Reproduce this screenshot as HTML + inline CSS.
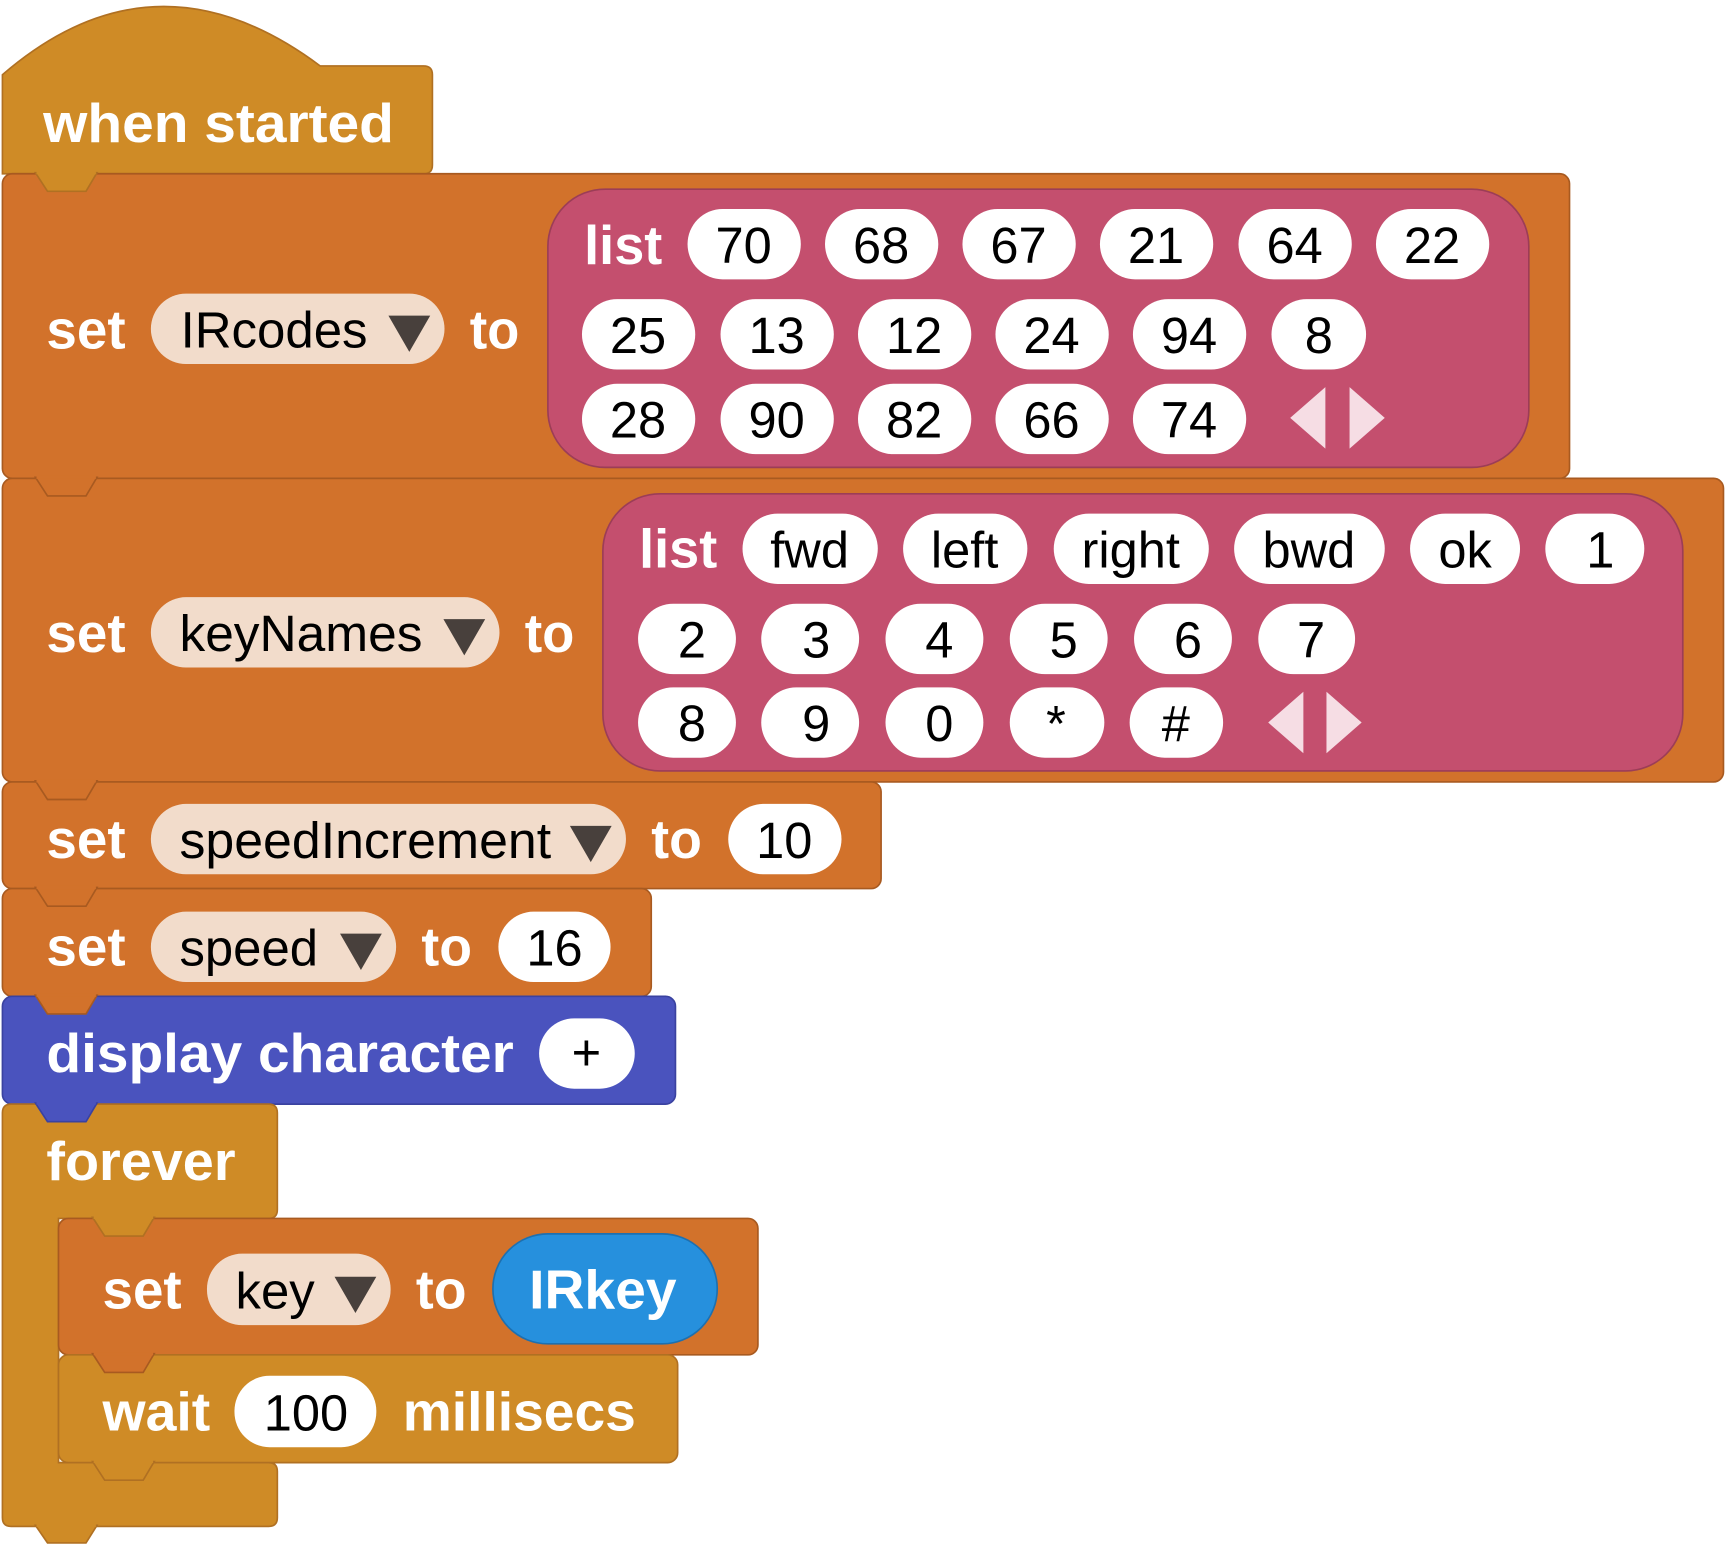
<!DOCTYPE html>
<html><head><meta charset="utf-8"><style>
html,body{margin:0;padding:0;background:#fff;}
svg{display:block;}
.b{font-family:"Liberation Sans",sans-serif;font-weight:bold;fill:#fff;font-size:50px;}
.r{font-family:"Liberation Sans",sans-serif;fill:#000;font-size:46px;}
</style></head><body>
<svg width="1727" height="1544" viewBox="0 0 1568 1404" xmlns="http://www.w3.org/2000/svg">
<!-- hat -->
<path d="M1,158 V68 Q140,-52 290,60 H384 Q392,60 392,68 V150 Q392,158 384,158 Z" fill="#CF8B26" stroke="#B07022" stroke-width="1.5"/>
<!-- set IRcodes -->
<rect x="1" y="158" width="1425" height="277" rx="9" fill="#D2722B" stroke="#A85A20" stroke-width="1.5"/>
<!-- set keyNames -->
<rect x="1" y="435" width="1565" height="276" rx="9" fill="#D2722B" stroke="#A85A20" stroke-width="1.5"/>
<!-- speedIncrement -->
<rect x="1" y="711" width="799" height="97" rx="9" fill="#D2722B" stroke="#A85A20" stroke-width="1.5"/>
<!-- speed -->
<rect x="1" y="808" width="590" height="98" rx="9" fill="#D2722B" stroke="#A85A20" stroke-width="1.5"/>
<!-- display -->
<rect x="1" y="906" width="612" height="98" rx="9" fill="#4A53BE" stroke="#3A42A0" stroke-width="1.5"/>
<!-- forever -->
<path d="M1,1012 Q1,1004 9,1004 H243 Q251,1004 251,1012 V1100 Q251,1108 243,1108 H52 V1330 H243 Q251,1330 251,1338 V1380 Q251,1388 243,1388 H9 Q1,1388 1,1380 Z" fill="#CF8B26" stroke="#B07022" stroke-width="1.5"/>
<!-- set key -->
<rect x="52" y="1108" width="636" height="124" rx="9" fill="#D2722B" stroke="#A85A20" stroke-width="1.5"/>
<!-- wait -->
<rect x="52" y="1232" width="563" height="98" rx="9" fill="#CF8B26" stroke="#B07022" stroke-width="1.5"/>

<!-- tabs -->
<g stroke-width="1.5">
<polygon points="31,157 42,174 77,174 87,157" fill="#CF8B26" stroke="#B07022"/>
<polygon points="31,434 42,451 77,451 87,434" fill="#D2722B" stroke="#A85A20"/>
<polygon points="31,710 42,727 77,727 87,710" fill="#D2722B" stroke="#A85A20"/>
<polygon points="31,807 42,824 77,824 87,807" fill="#D2722B" stroke="#A85A20"/>
<polygon points="31,905 42,922 77,922 87,905" fill="#D2722B" stroke="#A85A20"/>
<polygon points="31,1003 42,1020 77,1020 87,1003" fill="#4A53BE" stroke="#3A42A0"/>
<polygon points="83,1107 94,1124 129,1124 139,1107" fill="#CF8B26" stroke="#B07022"/>
<polygon points="83,1231 94,1248 129,1248 139,1231" fill="#D2722B" stroke="#A85A20"/>
<polygon points="83,1329 94,1346 129,1346 139,1329" fill="#CF8B26" stroke="#B07022"/>
<polygon points="31,1387 42,1403 77,1403 87,1387" fill="#CF8B26" stroke="#B07022"/>
</g>
<!-- cover tab top lines -->
<g stroke-width="3">
<line x1="32" y1="157" x2="86" y2="157" stroke="#CF8B26"/>
<line x1="32" y1="434" x2="86" y2="434" stroke="#D2722B"/>
<line x1="32" y1="710" x2="86" y2="710" stroke="#D2722B"/>
<line x1="32" y1="807" x2="86" y2="807" stroke="#D2722B"/>
<line x1="32" y1="905" x2="86" y2="905" stroke="#D2722B"/>
<line x1="32" y1="1003" x2="86" y2="1003" stroke="#4A53BE"/>
<line x1="84" y1="1107" x2="138" y2="1107" stroke="#CF8B26"/>
<line x1="84" y1="1231" x2="138" y2="1231" stroke="#D2722B"/>
<line x1="84" y1="1329" x2="138" y2="1329" stroke="#CF8B26"/>
<line x1="32" y1="1387" x2="86" y2="1387" stroke="#CF8B26"/>
</g>

<!-- list blocks -->
<rect x="497" y="172" width="892" height="253" rx="52" fill="#C44F6E" stroke="#9C3D57" stroke-width="1.5"/>
<rect x="547" y="449" width="982" height="252" rx="52" fill="#C44F6E" stroke="#9C3D57" stroke-width="1.5"/>

<!-- IRkey -->
<rect x="447" y="1122" width="204" height="100" rx="50" fill="#2690DD" stroke="#1D70B0" stroke-width="1.5"/>

<!-- dropdowns -->
<g fill="#F2DCCB">
<rect x="136" y="267" width="267" height="64" rx="32"/>
<rect x="136" y="543" width="317" height="64" rx="32"/>
<rect x="136" y="731" width="432" height="64" rx="32"/>
<rect x="136" y="829" width="223" height="64" rx="32"/>
<rect x="187" y="1140" width="167" height="65" rx="32"/>
</g>
<g fill="#48403C">
<polygon points="352,287 390,287 371,320"/>
<polygon points="402,563 440,563 421,596"/>
<polygon points="517,751 555,751 536,784"/>
<polygon points="308,849 346,849 327,882"/>
<polygon points="303,1161 341,1161 322,1194"/>
</g>

<!-- white pills -->
<g fill="#fff">
<rect x="624" y="190" width="103" height="64" rx="32"/><rect x="749" y="190" width="103" height="64" rx="32"/><rect x="874" y="190" width="103" height="64" rx="32"/><rect x="999" y="190" width="103" height="64" rx="32"/><rect x="1125" y="190" width="103" height="64" rx="32"/><rect x="1250" y="190" width="103" height="64" rx="32"/>
<rect x="528" y="272" width="103" height="64" rx="32"/><rect x="654" y="272" width="103" height="64" rx="32"/><rect x="779" y="272" width="103" height="64" rx="32"/><rect x="904" y="272" width="103" height="64" rx="32"/><rect x="1029" y="272" width="103" height="64" rx="32"/><rect x="1155" y="272" width="86" height="64" rx="32"/>
<rect x="528" y="349" width="103" height="64" rx="32"/><rect x="654" y="349" width="103" height="64" rx="32"/><rect x="779" y="349" width="103" height="64" rx="32"/><rect x="904" y="349" width="103" height="64" rx="32"/><rect x="1029" y="349" width="103" height="64" rx="32"/>
<rect x="674" y="467" width="123" height="64" rx="32"/><rect x="820" y="467" width="113" height="64" rx="32"/><rect x="957" y="467" width="141" height="64" rx="32"/><rect x="1121" y="467" width="137" height="64" rx="32"/><rect x="1281" y="467" width="100" height="64" rx="32"/><rect x="1404" y="467" width="90" height="64" rx="32"/>
<rect x="579" y="549" width="89" height="64" rx="32"/><rect x="691" y="549" width="89" height="64" rx="32"/><rect x="804" y="549" width="89" height="64" rx="32"/><rect x="917" y="549" width="89" height="64" rx="32"/><rect x="1030" y="549" width="89" height="64" rx="32"/><rect x="1143" y="549" width="88" height="64" rx="32"/>
<rect x="579" y="625" width="89" height="64" rx="32"/><rect x="691" y="625" width="89" height="64" rx="32"/><rect x="804" y="625" width="89" height="64" rx="32"/><rect x="917" y="625" width="86" height="64" rx="32"/><rect x="1026" y="625" width="85" height="64" rx="32"/>
<rect x="661" y="731" width="103" height="64" rx="32"/>
<rect x="452" y="829" width="102" height="64" rx="32"/>
<rect x="489" y="926" width="87" height="64" rx="32"/>
<rect x="212" y="1251" width="129" height="65" rx="32"/>
</g>
<!-- arrows -->
<g fill="#F6DDE4">
<polygon points="1204,352 1204,408 1172,380"/><polygon points="1226,352 1226,408 1258,380"/>
<polygon points="1184,629 1184,685 1152,657"/><polygon points="1205,629 1205,685 1237,657"/>
</g>

<!-- white bold labels -->
<text class="b" x="38" y="129" textLength="319" lengthAdjust="spacingAndGlyphs">when  started</text>
<text class="b" x="41" y="317" textLength="72" lengthAdjust="spacingAndGlyphs">set</text>
<text class="b" x="426" y="317" textLength="45" lengthAdjust="spacingAndGlyphs">to</text>
<text class="b" x="530" y="240" textLength="71" lengthAdjust="spacingAndGlyphs">list</text>
<text class="b" x="41" y="593" textLength="72" lengthAdjust="spacingAndGlyphs">set</text>
<text class="b" x="476" y="593" textLength="45" lengthAdjust="spacingAndGlyphs">to</text>
<text class="b" x="580" y="516" textLength="71" lengthAdjust="spacingAndGlyphs">list</text>
<text class="b" x="41" y="780" textLength="72" lengthAdjust="spacingAndGlyphs">set</text>
<text class="b" x="591" y="780" textLength="46" lengthAdjust="spacingAndGlyphs">to</text>
<text class="b" x="41" y="878" textLength="72" lengthAdjust="spacingAndGlyphs">set</text>
<text class="b" x="382" y="878" textLength="46" lengthAdjust="spacingAndGlyphs">to</text>
<text class="b" x="41" y="975" textLength="425" lengthAdjust="spacingAndGlyphs">display  character</text>
<text class="b" x="41" y="1073" textLength="172" lengthAdjust="spacingAndGlyphs">forever</text>
<text class="b" x="92" y="1190" textLength="72" lengthAdjust="spacingAndGlyphs">set</text>
<text class="b" x="377" y="1190" textLength="46" lengthAdjust="spacingAndGlyphs">to</text>
<text class="b" x="480" y="1190" textLength="134" lengthAdjust="spacingAndGlyphs">IRkey</text>
<text class="b" x="92" y="1301" textLength="98" lengthAdjust="spacingAndGlyphs">wait</text>
<text class="b" x="365" y="1301" textLength="212" lengthAdjust="spacingAndGlyphs">millisecs</text>

<!-- dropdown labels -->
<text class="r" x="163" y="316" textLength="170" lengthAdjust="spacingAndGlyphs">IRcodes</text>
<text class="r" x="162" y="592" textLength="221" lengthAdjust="spacingAndGlyphs">keyNames</text>
<text class="r" x="162" y="780" textLength="338" lengthAdjust="spacingAndGlyphs">speedIncrement</text>
<text class="r" x="162" y="878" textLength="126" lengthAdjust="spacingAndGlyphs">speed</text>
<text class="r" x="213" y="1190" textLength="72" lengthAdjust="spacingAndGlyphs">key</text>

<!-- pill labels -->
<g class="r" text-anchor="middle">
<text class="r" x="675" y="239" text-anchor="middle">70</text><text class="r" x="800" y="239" text-anchor="middle">68</text><text class="r" x="925" y="239" text-anchor="middle">67</text><text class="r" x="1050" y="239" text-anchor="middle">21</text><text class="r" x="1176" y="239" text-anchor="middle">64</text><text class="r" x="1301" y="239" text-anchor="middle">22</text>
<text class="r" x="579" y="321" text-anchor="middle">25</text><text class="r" x="705" y="321" text-anchor="middle">13</text><text class="r" x="830" y="321" text-anchor="middle">12</text><text class="r" x="955" y="321" text-anchor="middle">24</text><text class="r" x="1080" y="321" text-anchor="middle">94</text><text class="r" x="1198" y="321" text-anchor="middle">8</text>
<text class="r" x="579" y="398" text-anchor="middle">28</text><text class="r" x="705" y="398" text-anchor="middle">90</text><text class="r" x="830" y="398" text-anchor="middle">82</text><text class="r" x="955" y="398" text-anchor="middle">66</text><text class="r" x="1080" y="398" text-anchor="middle">74</text>
<text class="r" x="735" y="516" text-anchor="middle">fwd</text><text class="r" x="876" y="516" text-anchor="middle">left</text><text class="r" x="1027" y="516" text-anchor="middle">right</text><text class="r" x="1189" y="516" text-anchor="middle">bwd</text><text class="r" x="1331" y="516" text-anchor="middle">ok</text><text class="r" x="1454" y="516" text-anchor="middle">1</text>
<text class="r" x="628" y="598" text-anchor="middle">2</text><text class="r" x="741" y="598" text-anchor="middle">3</text><text class="r" x="853" y="598" text-anchor="middle">4</text><text class="r" x="966" y="598" text-anchor="middle">5</text><text class="r" x="1079" y="598" text-anchor="middle">6</text><text class="r" x="1191" y="598" text-anchor="middle">7</text>
<text class="r" x="628" y="674" text-anchor="middle">8</text><text class="r" x="741" y="674" text-anchor="middle">9</text><text class="r" x="853" y="674" text-anchor="middle">0</text><text class="r" x="959" y="674" text-anchor="middle">*</text><text class="r" x="1068" y="674" text-anchor="middle">#</text>
<text class="r" x="712" y="780" text-anchor="middle">10</text>
<text class="r" x="503" y="878" text-anchor="middle">16</text>
<text class="r" x="532" y="973" text-anchor="middle">+</text>
<text class="r" x="277" y="1301" text-anchor="middle">100</text>
</g>
</svg>
</body></html>
